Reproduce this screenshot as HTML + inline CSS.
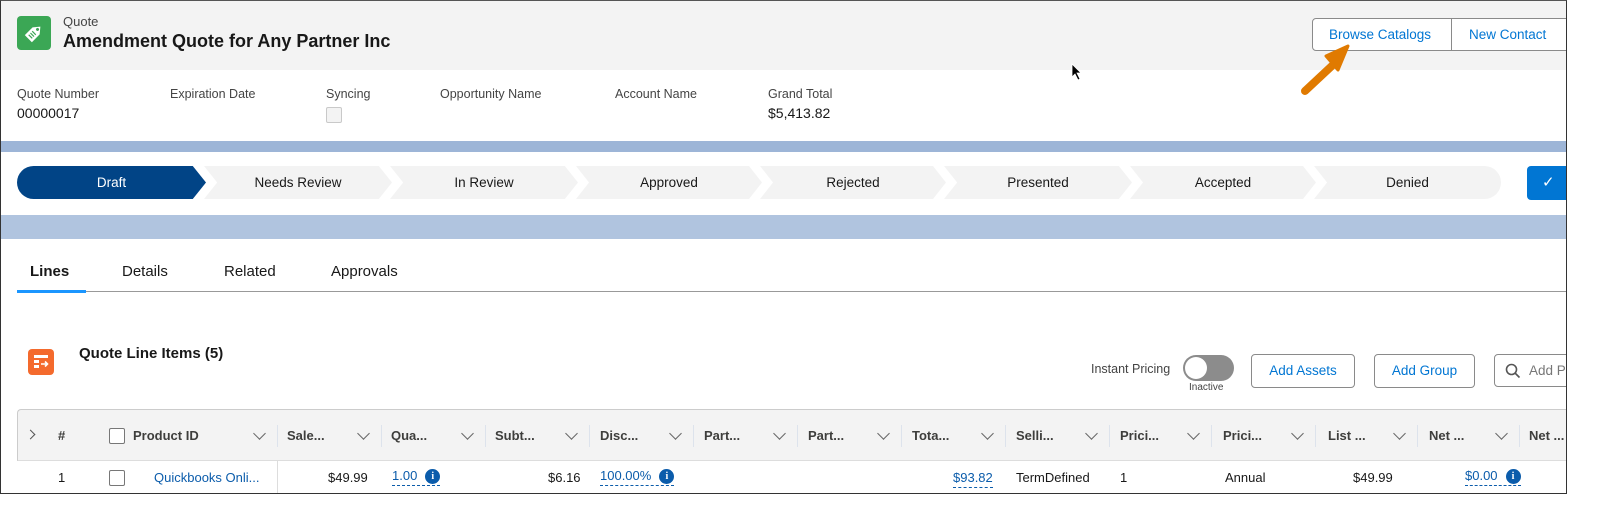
<!DOCTYPE html>
<html><head><meta charset="utf-8"><style>
*{margin:0;padding:0;box-sizing:border-box}
body{width:1600px;height:505px;background:#fff;font-family:"Liberation Sans",Arial,sans-serif;color:#181818;position:relative;overflow:hidden;font-size:13px}
.a{position:absolute;white-space:nowrap}
.frame{position:absolute;left:0;top:0;width:1567px;height:494px;border:1.5px solid #333;border-top:1px solid #555;overflow:hidden;background:#fff}
.lbl{font-size:12.5px;color:#444}
.seg{position:absolute;top:165px;height:33px;background:#f3f3f3;text-align:center;line-height:33px;font-size:13.5px;color:#181818}
.th{position:absolute;top:427px;font-size:13px;font-weight:bold;color:#3e3e3c}
.dv{position:absolute;top:424px;width:1px;height:22px;background:#dde3ec}
.chev{position:absolute;top:428px;width:9px;height:9px;border-right:1.3px solid #666;border-bottom:1.3px solid #666;transform:rotate(45deg)}
.td{position:absolute;top:469px;font-size:13px}
.lk{color:#0b5cab}
.dash{border-bottom:1px dashed #0b5cab;padding-bottom:2px}
.info{display:inline-block;width:15px;height:15px;border-radius:50%;background:#0b5cab;color:#fff;font-size:10px;font-weight:bold;text-align:center;line-height:15px;font-family:"Liberation Serif",serif;vertical-align:1px;margin-left:8px}
.btn{position:absolute;border:1px solid #8a8a8a;border-radius:4px;background:#fff;color:#0176d3;font-size:13.5px;text-align:center}
</style></head><body>
<div class="frame">
<div class="a" style="left:0;top:0;width:1567px;height:69px;background:#f3f3f3"></div>
<div class="a" style="left:16px;top:15px;width:34px;height:34px;border-radius:4px;background:#3ba755"></div>
<svg class="a" style="left:16px;top:15px" width="34" height="34" viewBox="0 0 34 34"><g transform="rotate(-45 17 17)"><path d="M9 12h11l6 5-6 5H9z" fill="#fff"/><circle cx="22" cy="17" r="1.5" fill="#3ba755"/><path d="M12 14.5v5M14.5 14.5v5M17 14.5v5" stroke="#3ba755" stroke-width="1.2"/></g></svg>
<div class="a" style="left:62px;top:13px;font-size:13px;color:#444">Quote</div>
<div class="a" style="left:62px;top:30px;font-size:18px;font-weight:bold">Amendment Quote for Any Partner Inc</div>
<div class="a" style="left:1311px;top:17px;width:256px;height:33px;border:1px solid #8a8a8a;border-radius:4px 0 0 4px;background:#fff"></div>
<div class="a" style="left:1450px;top:17px;width:1px;height:33px;background:#8a8a8a"></div>
<div class="a" style="left:1328px;top:26px;color:#0176d3;font-size:13.5px">Browse Catalogs</div>
<div class="a" style="left:1468px;top:26px;color:#0176d3;font-size:13.5px">New Contact</div>
<svg class="a" style="left:1290px;top:40px" width="60" height="60"><path d="M14 50 L44 22" stroke="#e07a00" stroke-width="8" stroke-linecap="round"/><path d="M35 15 L57 5 L47 29 Z" fill="#e07a00" stroke="#e07a00" stroke-width="3" stroke-linejoin="round"/></svg>
<svg class="a" style="left:1070px;top:62px" width="12" height="18"><path d="M1 1v13l3-3 3 6 2-1-3-6h4z" fill="#000" stroke="#fff" stroke-width=".8"/></svg>
<div class="a lbl" style="left:16px;top:86px">Quote Number</div>
<div class="a" style="left:16px;top:104px;font-size:14px">00000017</div>
<div class="a lbl" style="left:169px;top:86px">Expiration Date</div>
<div class="a lbl" style="left:325px;top:86px">Syncing</div>
<div class="a" style="left:325px;top:106px;width:16px;height:16px;border:1px solid #c9c9c9;border-radius:2px;background:#f3f3f3"></div>
<div class="a lbl" style="left:439px;top:86px">Opportunity Name</div>
<div class="a lbl" style="left:614px;top:86px">Account Name</div>
<div class="a lbl" style="left:767px;top:86px">Grand Total</div>
<div class="a" style="left:767px;top:104px;font-size:14px">$5,413.82</div>
<div class="a" style="left:0;top:140px;width:1567px;height:11px;background:#9db5d7"></div>
<div class="a" style="left:0;top:214px;width:1567px;height:24px;background:#b0c4df"></div>
<div class="seg" style="left:16px;width:189px;background:#014486;color:#fff;border-radius:17px 0 0 17px;clip-path:polygon(0 0,93% 0,100% 50%,93% 100%,0 100%)">Draft</div>
<div class="seg" style="left:203px;width:188px;clip-path:polygon(0 0,93% 0,100% 50%,93% 100%,0 100%,7% 50%)">Needs Review</div>
<div class="seg" style="left:389px;width:188px;clip-path:polygon(0 0,93% 0,100% 50%,93% 100%,0 100%,7% 50%)">In Review</div>
<div class="seg" style="left:575px;width:186px;clip-path:polygon(0 0,93% 0,100% 50%,93% 100%,0 100%,7% 50%)">Approved</div>
<div class="seg" style="left:759px;width:186px;clip-path:polygon(0 0,93% 0,100% 50%,93% 100%,0 100%,7% 50%)">Rejected</div>
<div class="seg" style="left:943px;width:188px;clip-path:polygon(0 0,93% 0,100% 50%,93% 100%,0 100%,7% 50%)">Presented</div>
<div class="seg" style="left:1129px;width:186px;clip-path:polygon(0 0,93% 0,100% 50%,93% 100%,0 100%,7% 50%)">Accepted</div>
<div class="seg" style="left:1313px;width:187px;border-radius:0 17px 17px 0;clip-path:polygon(0 0,100% 0,100% 100%,0 100%,7% 50%)">Denied</div>
<div class="a" style="left:1526px;top:165px;width:45px;height:34px;background:#0176d3;border-radius:4px;color:#fff;font-size:15px;line-height:34px;padding-left:15px">✓</div>
<div class="a" style="left:29px;top:262px;font-size:15px;font-weight:bold">Lines</div>
<div class="a" style="left:121px;top:262px;font-size:15px">Details</div>
<div class="a" style="left:223px;top:262px;font-size:15px">Related</div>
<div class="a" style="left:330px;top:262px;font-size:15px">Approvals</div>
<div class="a" style="left:16px;top:290px;width:1551px;height:1px;background:#999"></div>
<div class="a" style="left:16px;top:289px;width:69px;height:3px;background:#1b96ff"></div>
<div class="a" style="left:27px;top:348px;width:26px;height:26px;border-radius:4px;background:#fe5c4c;background:#f46a2d"></div>
<svg class="a" style="left:27px;top:348px" width="26" height="26"><rect x="6" y="6" width="14" height="3" fill="#fff"/><rect x="6" y="11" width="5" height="3" fill="#fff"/><rect x="6" y="16" width="5" height="3" fill="#fff"/><path d="M13 15h6M17 12.5l2.5 2.5-2.5 2.5" stroke="#fff" stroke-width="1.6" fill="none"/></svg>
<div class="a" style="left:78px;top:344px;font-size:15px;font-weight:bold">Quote Line Items (5)</div>
<div class="a" style="left:1090px;top:361px;font-size:12.5px;color:#444">Instant Pricing</div>
<div class="a" style="left:1182px;top:354px;width:51px;height:26px;border-radius:13px;background:#8c8c8c"></div>
<div class="a" style="left:1184px;top:356px;width:22px;height:22px;border-radius:50%;background:#fff"></div>
<div class="a" style="left:1188px;top:381px;font-size:10px;color:#444">Inactive</div>
<div class="btn" style="left:1250px;top:353px;width:104px;height:34px;line-height:32px">Add Assets</div>
<div class="btn" style="left:1373px;top:353px;width:101px;height:34px;line-height:32px">Add Group</div>
<div class="btn" style="left:1493px;top:353px;width:90px;height:33px;line-height:31px;text-align:left;padding-left:34px;color:#777">Add Pr</div>
<svg class="a" style="left:1504px;top:362px" width="16" height="16"><circle cx="6.5" cy="6.5" r="5" stroke="#555" stroke-width="1.6" fill="none"/><path d="M10 10l4.5 4.5" stroke="#555" stroke-width="1.6"/></svg>
<div class="a" style="left:16px;top:408px;width:1551px;height:52px;background:#f3f3f3;border-top:1px solid #ccc;border-bottom:1px solid #ddd;border-left:1px solid #ccc;border-radius:4px 0 0 0"></div>
<div class="a" style="left:26px;top:430px;width:7px;height:7px;border-right:1.3px solid #555;border-top:1.3px solid #555;transform:rotate(45deg)"></div>
<div class="th" style="left:57px">#</div>
<div class="a" style="left:108px;top:427px;width:16px;height:16px;border:1px solid #777;border-radius:2px;background:#fff"></div>
<div class="th" style="left:132px">Product ID</div><div class="chev" style="left:254px"></div><div class="dv" style="left:276px"></div>
<div class="th" style="left:286px">Sale...</div><div class="chev" style="left:358px"></div><div class="dv" style="left:380px"></div>
<div class="th" style="left:390px">Qua...</div><div class="chev" style="left:462px"></div><div class="dv" style="left:484px"></div>
<div class="th" style="left:494px">Subt...</div><div class="chev" style="left:566px"></div><div class="dv" style="left:588px"></div>
<div class="th" style="left:599px">Disc...</div><div class="chev" style="left:670px"></div><div class="dv" style="left:692px"></div>
<div class="th" style="left:703px">Part...</div><div class="chev" style="left:774px"></div><div class="dv" style="left:796px"></div>
<div class="th" style="left:807px">Part...</div><div class="chev" style="left:878px"></div><div class="dv" style="left:900px"></div>
<div class="th" style="left:911px">Tota...</div><div class="chev" style="left:982px"></div><div class="dv" style="left:1004px"></div>
<div class="th" style="left:1015px">Selli...</div><div class="chev" style="left:1086px"></div><div class="dv" style="left:1108px"></div>
<div class="th" style="left:1119px">Prici...</div><div class="chev" style="left:1188px"></div><div class="dv" style="left:1210px"></div>
<div class="th" style="left:1222px">Prici...</div><div class="chev" style="left:1292px"></div><div class="dv" style="left:1314px"></div>
<div class="th" style="left:1327px">List ...</div><div class="chev" style="left:1394px"></div><div class="dv" style="left:1416px"></div>
<div class="th" style="left:1428px">Net ...</div><div class="chev" style="left:1496px"></div><div class="dv" style="left:1518px"></div>
<div class="th" style="left:1528px">Net ...</div>
<div class="a" style="left:276px;top:460px;width:1px;height:34px;background:#ddd"></div>
<div class="td" style="left:57px">1</div>
<div class="a" style="left:108px;top:469px;width:16px;height:16px;border:1px solid #777;border-radius:2px"></div>
<div class="td lk" style="left:153px">Quickbooks Onli...</div>
<div class="td" style="left:327px">$49.99</div>
<div class="td lk" style="left:391px;top:467px"><span class="dash">1.00<span class="info">i</span></span></div>
<div class="td" style="left:547px">$6.16</div>
<div class="td lk" style="left:599px;top:467px"><span class="dash">100.00%<span class="info">i</span></span></div>
<div class="td lk" style="left:952px"><span class="dash">$93.82</span></div>
<div class="td" style="left:1015px">TermDefined</div>
<div class="td" style="left:1119px">1</div>
<div class="td" style="left:1224px">Annual</div>
<div class="td" style="left:1352px">$49.99</div>
<div class="td lk" style="left:1464px;top:467px"><span class="dash">$0.00<span class="info">i</span></span></div>
</div>
</body></html>
